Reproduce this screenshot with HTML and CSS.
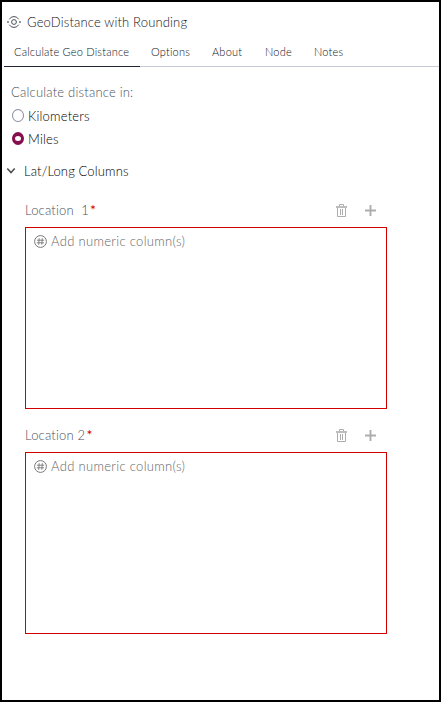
FILE: index.html
```html
<!DOCTYPE html>
<html lang="en">
<head>
<meta charset="utf-8">
<title>GeoDistance with Rounding</title>
<link rel="stylesheet" href="styles.css">
</head>
<body>
<main class="panel">
  <header class="title">
    <svg class="title-icon" width="14" height="14" viewBox="0 0 14 14" fill="none" stroke="#4a4f5a">
      <circle cx="7" cy="7" r="2.4"/>
      <path d="M2.3 4.3A5.4 5.4 0 0 1 11.7 4.3M2.3 9.7A5.4 5.4 0 0 0 11.7 9.7"/>
      <path d="M.2 7h1.6M12.2 7h1.6" stroke-width="1.6"/>
    </svg>
    <h1>GeoDistance with Rounding</h1>
  </header>
  <nav class="tabs">
    <a class="tab active">Calculate Geo Distance</a>
    <a class="tab">Options</a>
    <a class="tab">About</a>
    <a class="tab">Node</a>
    <a class="tab">Notes</a>
  </nav>
  <section class="distance">
    <div class="label">Calculate distance in:</div>
    <div class="option"><i class="radio"></i><span>Kilometers</span></div>
    <div class="option"><i class="radio checked"></i><span>Miles</span></div>
  </section>
  <div class="group">
    <svg width="10" height="8" viewBox="0 0 10 8" fill="none" stroke="#4c4c4c" stroke-width="1.5"><path d="M1.3 1.5L5 5.6L8.7 1.5"/></svg>
    <span>Lat/Long Columns</span>
  </div>
  <section class="location">
    <div class="head">
      <span>Location&nbsp; 1</span><span class="required">*</span>
      <svg class="trash" width="11" height="13" viewBox="0 0 11 13" fill="none" stroke="#adadad"><path d="M3.5 2V.5h4V2M1.5 4v8.5h8V4M4.5 5v6M6.5 5v6"/><path d="M0 3h11" stroke-width="1.6"/></svg>
      <svg class="plus" width="11" height="11" viewBox="0 0 11 11" stroke="#adadad" stroke-width="1.9"><path d="M0 5.5h11M5.5 0v11"/></svg>
    </div>
    <div class="box">
      <svg width="13" height="13" viewBox="0 0 13 13" fill="none" stroke="#777"><circle cx="6.5" cy="6.5" r="5.9"/><path d="M5.2 3.2L4.7 9.8M8.3 3.2L7.8 9.8M3 5.2h7.2M2.8 7.8H10" stroke-width=".9"/></svg>
      <span>Add numeric column(s)</span>
    </div>
  </section>
  <section class="location">
    <div class="head">
      <span>Location 2</span><span class="required">*</span>
      <svg class="trash" width="11" height="13" viewBox="0 0 11 13" fill="none" stroke="#adadad"><path d="M3.5 2V.5h4V2M1.5 4v8.5h8V4M4.5 5v6M6.5 5v6"/><path d="M0 3h11" stroke-width="1.6"/></svg>
      <svg class="plus" width="11" height="11" viewBox="0 0 11 11" stroke="#adadad" stroke-width="1.9"><path d="M0 5.5h11M5.5 0v11"/></svg>
    </div>
    <div class="box">
      <svg width="13" height="13" viewBox="0 0 13 13" fill="none" stroke="#777"><circle cx="6.5" cy="6.5" r="5.9"/><path d="M5.2 3.2L4.7 9.8M8.3 3.2L7.8 9.8M3 5.2h7.2M2.8 7.8H10" stroke-width=".9"/></svg>
      <span>Add numeric column(s)</span>
    </div>
  </section>
</main>
</body>
</html>
```
FILE: styles.css
```css
* { box-sizing: border-box; }
body { margin: 0; background: #fff; font: 300 13px/20px Lato, "Liberation Sans", sans-serif; color: #000; }
.panel { width: 441px; height: 702px; border: 2px solid #000; }
svg { display: block; flex: none; }
.title { display: flex; align-items: center; gap: 6px; height: 36px; padding: 4px 0 0 5px; }
h1 { margin: 0; font: inherit; color: #101420; letter-spacing: .16px; }
.tabs { display: flex; height: 29px; margin-left: 2px; border-bottom: 1px solid #c4cbd5; font-size: 11px; line-height: 27px; color: #101420; letter-spacing: .2px; }
.tab { height: 29px; white-space: nowrap; width: 52px; }
.tab.active { width: 136px; padding-left: 10px; margin-right: 11px; border-bottom: 1px solid #222633; }
.tab:nth-child(2) { width: 61px; }
.tab:nth-child(3) { width: 53px; }
.tab:nth-child(4) { width: 49px; }
.distance { padding: 15px 0 0 9px; letter-spacing: .2px; }
.label { height: 20px; color: #4a5260; }
.option { display: flex; align-items: center; gap: 4px; height: 23px; padding-left: 1px; }
.label + .option { margin-top: 2px; }
.radio { width: 12px; height: 13px; border: 1px solid #858ba0; border-radius: 50%; }
.radio.checked { border: 3.5px solid #850f4d; border-width: 4px 3px; }
.group { display: flex; align-items: center; gap: 8px; height: 20px; margin-top: 11px; padding-left: 4px; letter-spacing: .13px; }
.location { width: 362px; margin: 19px 0 0 23px; }
.location + .location { margin-top: 16px; }
.head { display: flex; align-items: center; height: 20px; margin-bottom: 7px; color: #4a5260; letter-spacing: .2px; }
.required { color: #d00000; margin-left: 1px; font-weight: 400; font-size: 14px; }
.trash { margin-left: auto; }
.plus { margin: 0 11px 0 18px; }
.box { display: flex; align-items: flex-start; gap: 4px; height: 182px; padding: 3px 8px; border: 1px solid #d00000; color: #666; letter-spacing: .32px; }
.box svg { margin-top: 4px; }
```
